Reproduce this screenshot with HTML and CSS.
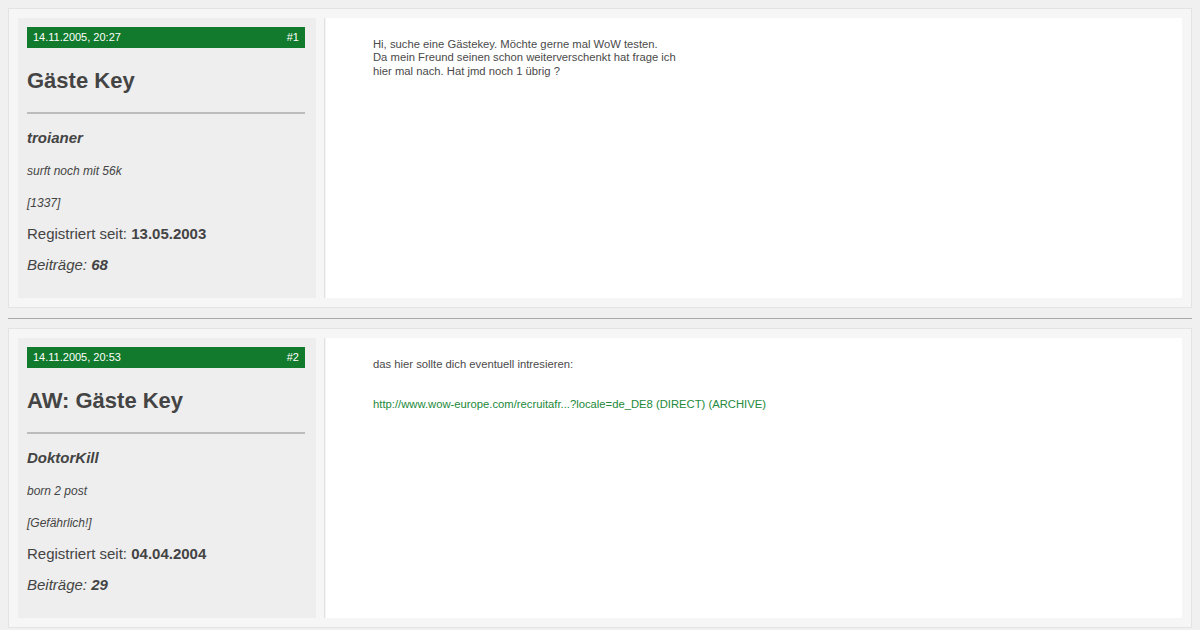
FILE: index.html
```html
<!DOCTYPE html>
<html lang="de">
<head>
    <meta charset="UTF-8">
    <title>Gäste Key</title>
    <link rel="stylesheet" href="styles.css">
</head>
<body>
    <div class="post">
        <div class="userinfo">
            <div class="post-head">
                <span>14.11.2005, 20:27</span>
                <span>#1</span>
            </div>
            <h2 class="post-title">Gäste Key</h2>
            <hr class="title-rule">
            <div class="username">troianer</div>
            <div class="usertitle">surft noch mit 56k</div>
            <div class="rank">[1337]</div>
            <div class="reg">Registriert seit: <b>13.05.2003</b></div>
            <div class="postcount">Beiträge: <b>68</b></div>
        </div>
        <div class="post-body">
            <div class="post-text">
                Hi, suche eine Gästekey. Möchte gerne mal WoW testen.<br>
                Da mein Freund seinen schon weiterverschenkt hat frage ich<br>
                hier mal nach. Hat jmd noch 1 übrig ?
            </div>
        </div>
    </div>

    <hr class="separator">

    <div class="post">
        <div class="userinfo">
            <div class="post-head">
                <span>14.11.2005, 20:53</span>
                <span>#2</span>
            </div>
            <h2 class="post-title">AW: Gäste Key</h2>
            <hr class="title-rule">
            <div class="username">DoktorKill</div>
            <div class="usertitle">born 2 post</div>
            <div class="rank">[Gefährlich!]</div>
            <div class="reg">Registriert seit: <b>04.04.2004</b></div>
            <div class="postcount">Beiträge: <b>29</b></div>
        </div>
        <div class="post-body">
            <div class="post-text">
                das hier sollte dich eventuell intresieren:<br><br><br>
                <a href="#">http://www.wow-europe.com/recruitafr...?locale=de_DE8</a> <a href="#">(DIRECT)</a> <a href="#">(ARCHIVE)</a>
            </div>
        </div>
    </div>
</body>
</html>
```

FILE: styles.css
```css
body {
    margin: 8px;
    background: #f0f0f0;
    font-family: "Liberation Sans", Arial, sans-serif;
    color: #444;
}
.post {
    display: flex;
    background: #f6f6f6;
    border: 1px solid #e3e3e3;
    padding: 9px;
}
.userinfo {
    width: 278px;
    flex-shrink: 0;
    background: #eeeeee;
    padding: 9px 11px 24px 9px;
}
.post-head {
    display: flex;
    justify-content: space-between;
    background: #127a2c;
    color: #fff;
    font-size: 11px;
    height: 21px;
    line-height: 21px;
    padding: 0 6px;
}
.post-title {
    margin: 20px 0 0 0;
    font-size: 22px;
    line-height: 26px;
    font-weight: bold;
    color: #444;
}
.title-rule {
    margin: 18px 0 0 0;
    border: none;
    border-top: 2px solid #bcbcbc;
    height: 0;
}
.username {
    margin-top: 15px;
    font-size: 15px;
    line-height: 18px;
    font-weight: bold;
    font-style: italic;
}
.usertitle {
    margin-top: 17px;
    font-size: 12px;
    line-height: 15px;
    font-style: italic;
}
.rank {
    margin-top: 17px;
    font-size: 12px;
    line-height: 15px;
    font-style: italic;
}
.reg {
    margin-top: 14px;
    font-size: 15px;
    line-height: 18px;
}
.postcount {
    margin-top: 13px;
    font-size: 15px;
    line-height: 18px;
    font-style: italic;
}
.post-body {
    flex: 1;
    display: flex;
    margin-left: 8px;
    border-left: 1px solid #e0e0e0;
    padding-left: 1px;
}
.post-text {
    flex: 1;
    background: #fff;
    padding: 20px 46px 20px 47px;
    font-size: 11.25px;
    line-height: 13.3px;
    color: #4a4a4a;
}
.post-text a {
    color: #22893a;
    text-decoration: none;
}
.separator {
    margin: 10px 0 9px 0;
    border: none;
    border-top: 1px solid #a9a9a9;
    height: 0;
}
```
